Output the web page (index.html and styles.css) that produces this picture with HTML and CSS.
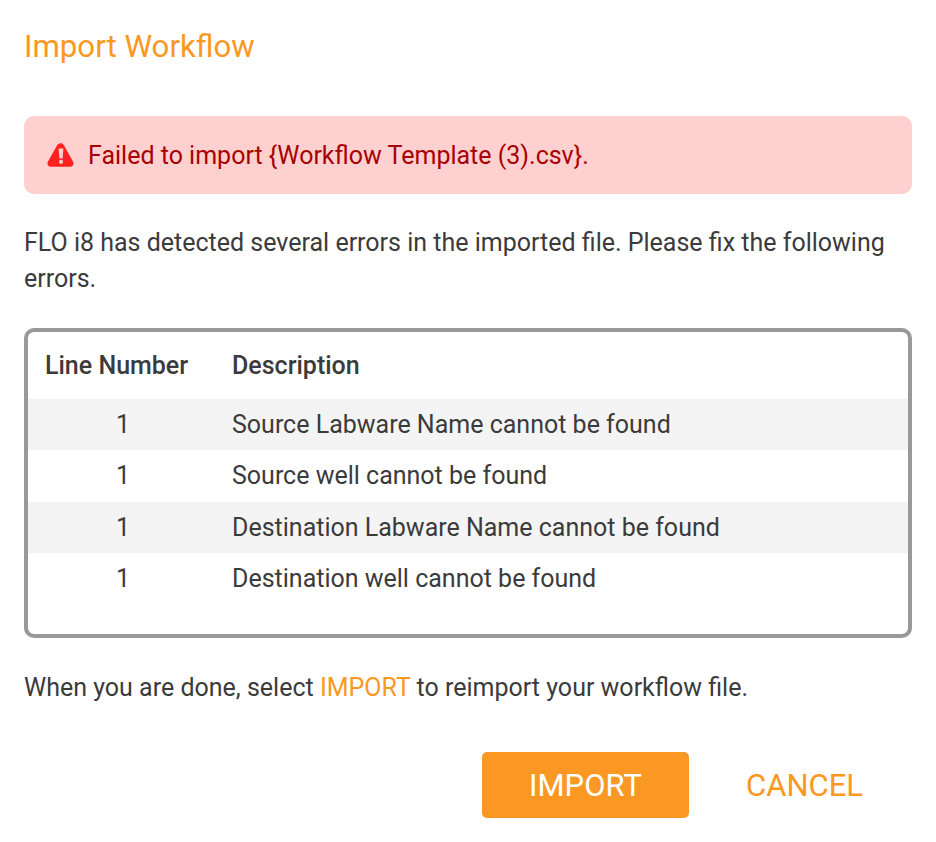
FILE: index.html
```html
<!DOCTYPE html>
<html lang="en">
<head>
    <meta charset="UTF-8">
    <title>Import Workflow</title>
    <link rel="stylesheet" href="styles.css">
</head>
<body>
    <div class="dialog">
        <h1 class="title">Import Workflow</h1>

        <div class="alert">
            <svg class="alert-icon" width="26" height="24" viewBox="0 0 26 24">
                <path fill="#ff2020" fill-rule="evenodd" d="M13 .3c1.100 0 2 .6 2.600 1.500l9.500 17c1.200 2.200-.3 4.900-2.800 4.900H2.700C.2 23.700-1.300 21 -.1 18.800l9.500-17C10 .9 11.900.3 13 .3zM10.600 5.500l.8 10h3.200l.8-10zM13 16.700a2.100 2.100 0 1 0 0 4.200 2.100 2.100 0 0 0 0-4.200z"/>
            </svg>
            <span>Failed to import {Workflow Template (3).csv}.</span>
        </div>

        <p class="message">FLO i8 has detected several errors in the imported file. Please fix the following errors.</p>

        <div class="errors">
            <div class="row head">
                <div class="line-col">Line Number</div>
                <div>Description</div>
            </div>
            <div class="row shaded">
                <div class="line-col">1</div>
                <div>Source Labware Name cannot be found</div>
            </div>
            <div class="row">
                <div class="line-col">1</div>
                <div>Source well cannot be found</div>
            </div>
            <div class="row shaded">
                <div class="line-col">1</div>
                <div>Destination Labware Name cannot be found</div>
            </div>
            <div class="row">
                <div class="line-col">1</div>
                <div>Destination well cannot be found</div>
            </div>
        </div>

        <p class="done">When you are done, select <span class="link">IMPORT</span> to reimport your workflow file.</p>

        <div class="actions">
            <button class="btn primary">IMPORT</button>
            <button class="btn cancel">CANCEL</button>
        </div>
    </div>
</body>
</html>
```

FILE: styles.css
```css
body {
    margin: 0;
    background: white;
    font-family: Roboto, sans-serif;
    color: #3b3b3b;
}
.dialog {
    padding: 24px;
}
.title {
    margin: 0;
    font-size: 31.2px;
    line-height: 46px;
    font-weight: 400;
    color: #fb9823;
}
.alert {
    display: flex;
    align-items: center;
    gap: 14px;
    height: 78px;
    margin-top: 46px;
    padding-left: 24px;
    box-sizing: border-box;
    background: #ffd0d0;
    border-radius: 10px;
    color: #a80000;
    font-size: 25px;
}
.alert-icon {
    overflow: visible;
}
.message {
    margin: 31px 0 0;
    font-size: 25px;
    line-height: 36px;
}
.errors {
    margin-top: 31px;
    height: 310px;
    box-sizing: border-box;
    border: 4px solid #999;
    border-radius: 10px;
    font-size: 25px;
}
.row {
    display: flex;
    align-items: center;
    height: 51.3px;
}
.row.head {
    height: 67px;
    font-weight: 500;
}
.shaded {
    background: #f4f4f4;
}
.line-col {
    width: 204px;
    flex-shrink: 0;
    padding-right: 14px;
    box-sizing: border-box;
    text-align: center;
    white-space: nowrap;
}
.head .line-col {
    padding: 0 0 0 17px;
    text-align: left;
}
.done {
    margin: 32px 0 0;
    font-size: 25px;
    line-height: 36px;
}
.link {
    color: #fb9823;
}
.actions {
    display: flex;
    justify-content: flex-end;
    margin-top: 46px;
}
.btn {
    height: 66px;
    border: none;
    border-radius: 5px;
    font-family: Roboto, sans-serif;
    font-size: 31px;
}
.primary {
    width: 207px;
    background: #fb9823;
    color: white;
}
.cancel {
    width: 223px;
    padding: 0 0 0 8px;
    background: none;
    color: #fb9823;
}
```
